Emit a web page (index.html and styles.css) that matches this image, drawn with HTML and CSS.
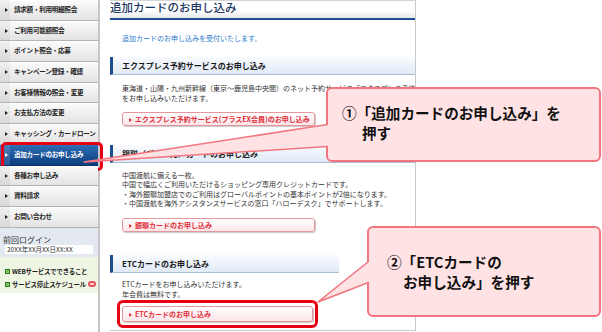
FILE: index.html
```html
<!DOCTYPE html>
<html lang="ja">
<head>
<meta charset="utf-8">
<title>追加カードのお申し込み</title>
<link rel="stylesheet" href="styles.css">
</head>
<body>
<div class="page">
  <nav class="side">
    <ul class="menu">
      <li class="item">請求額・利用明細照会</li>
      <li class="item">ご利用可能額照会</li>
      <li class="item">ポイント照会・応募</li>
      <li class="item">キャンペーン登録・確認</li>
      <li class="item">お客様情報の照会・変更</li>
      <li class="item">お支払方法の変更</li>
      <li class="item">キャッシング・カードローン</li>
      <li class="item active">追加カードのお申し込み</li>
      <li class="item">各種お申し込み</li>
      <li class="item">資料請求</li>
      <li class="item">お問い合わせ</li>
    </ul>
    <div class="login">
      <div class="login-label">前回ログイン</div>
      <div class="login-time">20XX年XX月XX日XX:XX</div>
    </div>
    <div class="links">
      <div class="link"><span class="sq"></span>WEBサービスでできること</div>
      <div class="link"><span class="sq"></span>サービス停止スケジュール<span class="ext"></span></div>
    </div>
  </nav>
  <main class="main">
    <h1 class="title">追加カードのお申し込み</h1>
    <p class="lead">追加カードのお申し込みを受付いたします。</p>

    <h2 class="sec-h">エクスプレス予約サービスのお申し込み</h2>
    <p class="txt">東海道・山陽・九州新幹線（東京～鹿児島中央間）のネット予約サービス「エクスプレス予約」<br>をお申し込みいただけます。</p>
    <div class="btn">エクスプレス予約サービス(プラスEX会員)のお申し込み</div>

    <h2 class="sec-h sec-2">銀聯（ぎんれん）カードのお申し込み</h2>
    <p class="txt txt-2">中国渡航に備える一枚。<br>中国で幅広くご利用いただけるショッピング専用クレジットカードです。<br>・海外銀聯加盟店でのご利用はグローバルポイントの基本ポイントが2倍になります。<br>・中国渡航を海外アシスタンスサービスの窓口「ハローデスク」でサポートします。</p>
    <div class="btn btn-2">銀聯カードのお申し込み</div>

    <h2 class="sec-h sec-3">ETCカードのお申し込み</h2>
    <p class="txt txt-3">ETCカードをお申し込みいただけます。<br>年会費は無料です。</p>
    <div class="hl"><div class="btn">ETCカードのお申し込み</div></div>
  </main>
</div>

<div class="callout c1">①「追加カードのお申し込み」を<br>押す</div>
<div class="callout c2">②「ETCカードの<br>お申し込み」を押す</div>

<svg class="pointers" width="602" height="332" viewBox="0 0 602 332">
  <path d="M84,162 L327,125 L332,125 L332,146 L327,146 Z" fill="#ffe3e4"/>
  <path d="M327.5,124.5 L84,162 L327.5,146.5" fill="none" stroke="#f27580" stroke-width="1.6" stroke-linejoin="round"/>
  <path d="M318,302 L368,262 L373,262 L373,282 L368,282 Z" fill="#ffe3e4"/>
  <path d="M368.5,261.5 L318,302 L368.5,282.5" fill="none" stroke="#f27580" stroke-width="1.6" stroke-linejoin="round"/>
</svg>
</body>
</html>
```
FILE: styles.css
```css
* { box-sizing: border-box; margin: 0; padding: 0; }

body {
  width: 602px;
  height: 332px;
  overflow: hidden;
  position: relative;
  background: #fff;
  font-family: "Noto Sans CJK JP", "Noto Sans", sans-serif;
  color: #333;
}

.page {
  display: flex;
  gap: 10px;
  height: 332px;
}

/* ---------- sidebar ---------- */
.side {
  width: 100px;
  flex: none;
  border-right: 2px solid #c6c6c6;
  display: flex;
  flex-direction: column;
}

.menu { list-style: none; }

.item {
  position: relative;
  height: 20.7px;
  padding-left: 14px;
  font-size: 6.6px;
  letter-spacing: -0.3px;
  font-weight: bold;
  line-height: 19.7px;
  color: #222;
  white-space: nowrap;
  background: linear-gradient(#fbfbfb, #e3e3e3);
  border-bottom: 1px solid #b3b3b3;
  box-shadow: inset 10px 0 0 rgba(0, 0, 0, 0.045), inset 0 1px 0 #fff;
}

.item::before {
  content: "";
  position: absolute;
  left: 5px;
  top: 8px;
  border-left: 3px solid #222;
  border-top: 2px solid transparent;
  border-bottom: 2px solid transparent;
}

.item.active {
  color: #fff;
  background: linear-gradient(#2f6db5, #0b3e7f);
  box-shadow: inset 10px 0 0 rgba(255, 255, 255, 0.14);
  border-bottom-color: #0a3166;
}

.item.active::before { border-left-color: #fff; }

.item.active::after {
  content: "";
  position: absolute;
  left: 1px;
  top: -3px;
  right: -5px;
  bottom: -6px;
  border: 3px solid #e60012;
  border-radius: 5px;
}

.login {
  background: #e3e8f1;
  padding: 7px 3px 3px 3px;
}

.login-label {
  font-size: 8px;
  line-height: 10px;
  color: #333;
}

.login-time {
  margin-left: 2px;
  margin-right: 2px;
  height: 9px;
  background: #fff;
  font-size: 6.5px;
  line-height: 9px;
  padding-left: 2px;
  color: #333;
}

.links {
  background: #eef5e2;
  padding: 8px 0 2px 5px;
}

.link {
  display: flex;
  align-items: center;
  height: 13px;
  font-size: 6.4px;
  letter-spacing: -0.2px;
  font-weight: bold;
  color: #222;
  white-space: nowrap;
}

.sq {
  width: 5px;
  height: 5px;
  margin-right: 2px;
  background: #4f9f33;
  border: 1px solid #2c7a1a;
  box-shadow: inset 0 0 0 1px #8cc774;
}

.ext {
  width: 8px;
  height: 6px;
  margin-left: 2px;
  border: 2px solid #e8505a;
  border-radius: 3px;
  background: #fbd3d6;
}

/* ---------- main ---------- */
.main {
  width: 306px;
  height: 331px;
  flex: none;
  border-top: 1px solid #d5d5d5;
  border-right: 1px solid #c8c8c8;
  border-bottom: 1px solid #c8c8c8;
  overflow: hidden;
}

.title {
  height: 19px;
  border-bottom: 2px solid #1c4f8f;
  background: linear-gradient(#fff 55%, #e8e8e8);
  font-size: 11.5px;
  font-weight: 500;
  line-height: 13px;
  color: #1d3862;
  white-space: nowrap;
}

.lead {
  margin: 13px 0 0 12px;
  font-size: 7px;
  line-height: 10px;
  color: #2a7bd0;
}

.sec-h {
  height: 18px;
  margin-top: 14px;
  border-left: 3px solid #1b4c8c;
  border-bottom: 1px solid #a9bdd6;
  background: linear-gradient(#f9fbfe, #e0eaf6);
  padding-left: 9px;
  font-size: 8px;
  font-weight: bold;
  line-height: 17px;
  color: #1a1a1a;
  white-space: nowrap;
  overflow: hidden;
}

.sec-2 { margin-top: 19px; }
.sec-3 { margin-top: 23px; margin-right: 76px; }

.txt {
  margin: 9px 0 0 12px;
  font-size: 7px;
  line-height: 9.5px;
  color: #333;
  white-space: nowrap;
}

.txt-2 { margin-top: 8px; line-height: 9.3px; }
.txt-3 { margin-top: 6px; line-height: 10px; }

.btn {
  margin: 9px 0 0 12px;
  width: 193px;
  height: 14px;
  padding-left: 6px;
  border: 1px solid #e3979d;
  border-radius: 3px;
  background: linear-gradient(#fff, #fde5e7);
  box-shadow: 1px 1px 1px rgba(0, 0, 0, 0.22);
  font-size: 7px;
  font-weight: bold;
  line-height: 12px;
  color: #e0303c;
  white-space: nowrap;
}

.btn::before {
  content: "";
  display: inline-block;
  margin-right: 3px;
  vertical-align: 0;
  border-left: 3px solid #e0303c;
  border-top: 2px solid transparent;
  border-bottom: 2px solid transparent;
}

.btn-2 { margin-top: 10px; }

.hl {
  margin: 1px 0 0 7px;
  width: 201px;
  border: 3px solid #e60012;
  border-radius: 6px;
  padding: 3px 2px;
}

.hl .btn {
  margin: 0;
  width: auto;
  height: 16px;
  line-height: 14px;
}

/* ---------- annotations ---------- */
.callout {
  position: absolute;
  background: #ffe3e4;
  border: 2px solid #f27580;
  border-radius: 6px;
  font-size: 14.6px;
  font-weight: bold;
  line-height: 20px;
  color: #111;
  white-space: nowrap;
}

.c1 {
  left: 326px;
  top: 87px;
  width: 275px;
  height: 75px;
  padding: 14px 0 0 34px;
  text-indent: -20px;
}

.c2 {
  left: 367px;
  top: 226px;
  width: 234px;
  height: 91px;
  padding: 24px 0 0 34px;
  text-indent: -16px;
}

.pointers {
  position: absolute;
  left: 0;
  top: 0;
  pointer-events: none;
}
```
